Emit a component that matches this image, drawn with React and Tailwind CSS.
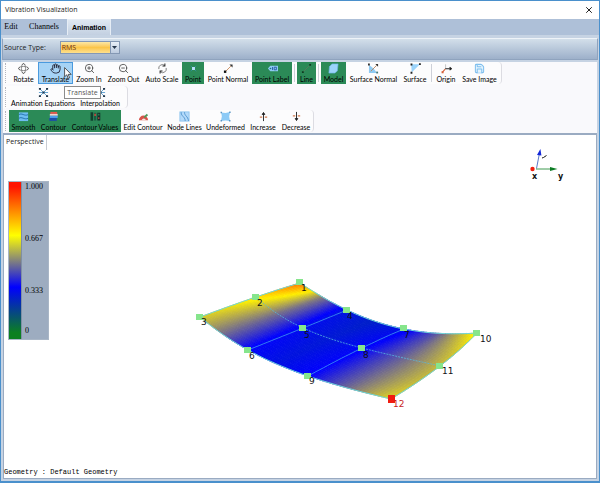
import React from "react";
import { Hand, Save, X, ZoomIn, ZoomOut } from "lucide-react";

const ICON = "block h-[11px] w-[11px]";

function Glyph({ children }) {
  return (
    <svg viewBox="0 0 12 12" className={ICON} fill="none" aria-hidden="true">
      {children}
    </svg>
  );
}

const icons = {
  rotate: (
    <Glyph>
      <ellipse cx="6" cy="6" rx="5.2" ry="2.2" stroke="#777" strokeWidth="0.9" />
      <ellipse cx="6" cy="6" rx="2.2" ry="5.2" stroke="#777" strokeWidth="0.9" />
      <path d="M4.6 1.8 6 .4l1.4 1.4M4.6 10.2 6 11.6l1.4-1.4M1.8 4.6.4 6l1.4 1.4M10.200 4.600 11.600 6l-1.400 1.400" stroke="#444" strokeWidth="0.8" />
    </Glyph>
  ),
  translate: <Hand className={ICON} color="#223" strokeWidth={2} />,
  zoomIn: <ZoomIn className={ICON} color="#444" strokeWidth={1.8} />,
  zoomOut: <ZoomOut className={ICON} color="#444" strokeWidth={1.8} />,
  autoScale: (
    <Glyph>
      <path d="M2 6.6A4 4 0 0 1 8.4 2.6M10 5.4A4 4 0 0 1 3.6 9.6" stroke="#777" strokeWidth="1" />
      <path d="M8.6.6v2.6H6M3.4 11.4V8.8H6" stroke="#222" strokeWidth="1.1" />
    </Glyph>
  ),
  point: (
    <Glyph>
      <path d="m3 3 6 6M9 3 3 9" stroke="#2f8f9c" strokeWidth="1" />
      <rect x="4.4" y="4.4" width="3.2" height="3.2" fill="#b8e2ff" />
    </Glyph>
  ),
  pointNormal: (
    <Glyph>
      <path d="M2.5 9.5 8.6 3.4" stroke="#c98a5c" strokeWidth="1" />
      <path d="M7 1.6h3.4V5z" fill="#333" />
      <rect x="1" y="8.2" width="2.6" height="2.6" fill="#111" />
    </Glyph>
  ),
  pointLabel: (
    <Glyph>
      <path d="M1 6l2.600-3H12v6H3.600z" fill="#8ccaf0" />
      <circle cx="3.8" cy="6" r="0.9" fill="#1d6b8c" />
      <path d="M6 4.4v3.2M7.800 4.600h2.400v2.8H7.800z" stroke="#1c4f9a" strokeWidth="0.9" />
    </Glyph>
  ),
  line: (
    <Glyph>
      <path d="m2 10 8-8" stroke="#5a7a5c" strokeWidth="0.9" />
      <path d="M1 9h2v2H1zM9 1h2v2H9z" fill="#0e3c22" />
    </Glyph>
  ),
  model: (
    <Glyph>
      <path d="M4.400 1h6.600l-.8 7.6L7.600 11H1l.6-7.2z" fill="#9bd3fb" stroke="#6ab4e4" strokeWidth="0.7" />
    </Glyph>
  ),
  surfaceNormal: (
    <Glyph>
      <path d="M1 2v9h9L6 6z" fill="#8fcaf2" />
      <path d="m3 9 6.4-6.4" stroke="#b88760" strokeWidth="1" />
      <path d="M8 1.2h3v3zM0 .6h2v2H0z" fill="#333" />
      <path d="M9 9.4h2v2H9z" fill="#477" />
    </Glyph>
  ),
  surface: (
    <Glyph>
      <path d="M1.4 1.4h9.4l-9 9z" fill="#9bd3fb" />
      <path d="M.6.6h2v2h-2zM9.8.2h2v2h-2zM.6 9.6h2v2h-2z" fill="#222" />
    </Glyph>
  ),
  origin: (
    <Glyph>
      <path d="M5 1.4v5" stroke="#bbb" strokeWidth="0.9" />
      <path d="M4.6 6.2h7M9.4 4.6l2 1.6-2 1.6" stroke="#222" strokeWidth="1.2" />
      <path d="m4.6 6.6-3 3.4" stroke="#d4603a" strokeWidth="1.2" />
      <path d="M.6 9h2.2v2.2H.6z" fill="#d4603a" />
    </Glyph>
  ),
  save: <Save className={ICON} color="#7fbfee" fill="#e4f4fe" strokeWidth={2.2} />,
  equations: (
    <Glyph>
      <path d="m1 1 10 10M11 1 1 11M1 6h10" stroke="#5b9fd0" strokeWidth="1" />
      <path d="M1 1h2.2v2H1zM8.8 1H11v2H8.8zM1 9h2.2v2H1zM8.8 9H11v2H8.8zM5 5h2v2H5z" fill="#1f3347" />
    </Glyph>
  ),
  smooth: (
    <Glyph>
      <rect x="1" y="1.500" width="10" height="9.500" fill="#6dbcf0" />
      <path d="M1 4c3-2.4 6 2 10 0M1 8c3-2.4 6 2 10 0" stroke="#1c6fa8" strokeWidth="1" />
    </Glyph>
  ),
  contour: (
    <Glyph>
      <path d="M2.6 1h7.400v2.2H2.600z" fill="#e2574c" />
      <path d="M2 3.2h8.600v2H2z" fill="#f1d3cf" />
      <path d="M2 5.200h8.600v2.400H2z" fill="#4e9ff0" />
      <path d="M1.400 7.600H9.600v3.200H1.400z" fill="#1e4ea8" />
    </Glyph>
  ),
  contourValues: (
    <Glyph>
      <path d="M.6 1.4h2.800v9.200H.6z" fill="#10402e" />
      <path d="M4.400 2h2.400v8.400H4.400z" fill="#1c5a44" />
      <path d="M4.600 3h2v2.400h-2zM8.600 6.400h2v2.400h-2z" fill="#b5483f" />
      <path d="M8 1.800h3.200v8.600H8zM8.900 3v2h1.400V3zM8.900 6.800v2h1.400v-2z" fill="#142e2a" fillRule="evenodd" />
    </Glyph>
  ),
  editContour: (
    <Glyph>
      <path d="M1 10a5 5 0 0 1 10 0z" fill="#d9534a" />
      <path d="M4 10a2.4 2.4 0 0 1 4.6 0z" fill="#f2e9e4" />
      <path d="M6 6.6 9.6 3l1.4 1.6-3.6 3z" fill="#4a9a58" />
    </Glyph>
  ),
  nodeLines: (
    <Glyph>
      <rect x="1" y="1" width="10" height="10" fill="#b4dafa" stroke="#8cc4ee" />
      <path d="M2.4 1.4c0 5 4 4 4.4 9.4M6 1.4c0 4 3.6 4 4.4 9.4" stroke="#4b92cc" strokeWidth="1" />
    </Glyph>
  ),
  undeformed: (
    <Glyph>
      <path d="m1.400 1.600 4.600.6 5-1L10 6l.8 4.8-4.800-.4-5 .6L2 6z" fill="#8ccaf6" />
      <path d="M.6.8h1.600v1.600H.6zM10 .6h1.6v1.600H10zM.6 9.8h1.6v1.600H.6zM9.800 9.800h1.6v1.600H9.800z" fill="#5b96c4" />
    </Glyph>
  ),
  increase: (
    <Glyph>
      <path d="M6 11V3M4.600 3.800 6 1.600l1.400 2.200z" stroke="#222" fill="#222" strokeWidth="1" />
      <path d="M2 6.6h2.600M7.400 6.6H10" stroke="#d0794e" strokeWidth="1.4" />
    </Glyph>
  ),
  decrease: (
    <Glyph>
      <path d="M6 1v8M4.600 8.200 6 10.400l1.400-2.200z" stroke="#222" fill="#222" strokeWidth="1" />
      <path d="M2 5.4h2.600M7.400 5.4H10" stroke="#d0794e" strokeWidth="1.4" />
    </Glyph>
  ),
};

function Tool({ icon, label, width, state = "plain" }) {
  const look = {
    plain: "",
    on: "bg-[#2b8a57]",
    hover: "bg-[#a6d3f5] outline outline-1 -outline-offset-1 outline-[#4a9ade]",
  }[state];
  return (
    <button
      type="button"
      aria-pressed={state === "on"}
      className={`flex h-[22px] shrink-0 flex-col items-center justify-between pt-px font-['Lato',sans-serif] text-[7px] leading-[10px] whitespace-nowrap text-black ${width} ${look}`}
    >
      {icons[icon]}
      <span>{label}</span>
    </button>
  );
}

function Grip() {
  return <span className="ml-[2px] h-[20px] w-[4px] shrink-0 border-l border-dotted border-[#b4b4bc]" />;
}

function Divider({ width }) {
  return (
    <span className={`flex shrink-0 justify-center ${width}`}>
      <span className="h-[18px] w-px bg-[#cdd0d8]" />
    </span>
  );
}

function Ribbon({ label, children }) {
  return (
    <div role="toolbar" aria-label={label} className="flex items-center self-start rounded-r-sm border-r border-[#dcdce2] bg-[#fcfcfd]">
      {children}
    </div>
  );
}

/* Node positions on the three long edges of the plate, left to right. */
const rails = [
  [[200, 317], [248, 350], [308, 376], [391, 399]],
  [[256, 297], [303, 328], [362, 348], [440, 366]],
  [[300, 283], [347, 310], [404, 329], [477, 333]],
];

/* Normalised amplitude, sampled at even steps along each of those edges. */
const amplitude = [
  [0.62, 0.48, 0.33, 0.29, 0.33, 0.47, 0.63],
  [0.7, 0.48, 0.31, 0.27, 0.32, 0.45, 0.59],
  [0.88, 0.51, 0.29, 0.25, 0.3, 0.45, 0.68],
];

function cubic(p, u) {
  const t = u * 3;
  return (
    (-p[0] * (t - 1) * (t - 2) * (t - 3)) / 6 +
    (p[1] * t * (t - 2) * (t - 3)) / 2 -
    (p[2] * t * (t - 1) * (t - 3)) / 2 +
    (p[3] * t * (t - 1) * (t - 2)) / 6
  );
}

function linear(p, u) {
  const t = u * (p.length - 1);
  const i = Math.min(p.length - 2, Math.floor(t));
  return p[i] + (p[i + 1] - p[i]) * (t - i);
}

function across(q, v) {
  return q[0] * (2 * v - 1) * (v - 1) + q[1] * 4 * v * (1 - v) + q[2] * v * (2 * v - 1);
}

function surfacePoint(u, v) {
  return [0, 1].map((axis) =>
    across(rails.map((rail) => cubic(rail.map((p) => p[axis]), u)), v)
  );
}

const stops = [
  [0, [0, 128, 32]],
  [0.333, [0, 0, 255]],
  [0.667, [255, 240, 0]],
  [1, [255, 20, 0]],
];

function scaleColour(value) {
  const x = Math.min(1, Math.max(0, value));
  const i = x < 0.333 ? 0 : x < 0.667 ? 1 : 2;
  const [a, ca] = stops[i];
  const [b, cb] = stops[i + 1];
  const k = (x - a) / (b - a);
  return `rgb(${ca.map((c, n) => Math.round(c + (cb[n] - c) * k)).join(",")})`;
}

const COLS = 90;
const ROWS = 24;
const cells = [];
for (let i = 0; i < COLS; i++) {
  for (let j = 0; j < ROWS; j++) {
    const u = [i / COLS, (i + 1) / COLS];
    const v = [j / ROWS, (j + 1) / ROWS];
    const mid = [(u[0] + u[1]) / 2, (v[0] + v[1]) / 2];
    cells.push({
      points: [[u[0], v[0]], [u[1], v[0]], [u[1], v[1]], [u[0], v[1]]]
        .map(([a, b]) => surfacePoint(a, b).map((n) => n.toFixed(2)).join(","))
        .join(" "),
      fill: scaleColour(across(amplitude.map((row) => linear(row, mid[0])), mid[1])),
    });
  }
}

function trace(fn) {
  return Array.from({ length: 31 }, (_, i) => fn(i / 30).map((n) => n.toFixed(1)).join(",")).join(" ");
}

const nodes = [
  ["1", 300, 282, 301, 291],
  ["2", 256, 297, 257, 306],
  ["3", 200, 317, 201, 325],
  ["4", 347, 310, 347, 319],
  ["5", 303, 328, 304, 338],
  ["6", 248, 350, 249, 359],
  ["7", 404, 328, 404, 338],
  ["8", 362, 348, 363, 358],
  ["9", 308, 376, 309, 384],
  ["10", 477, 333, 480, 342],
  ["11", 440, 366, 442, 374],
];

function Scene() {
  return (
    <svg viewBox="4 135 592 343" className="absolute inset-0 h-full w-full" role="img" aria-label="Deformed plate geometry">
      <g strokeWidth="0.8">
        {cells.map((c, i) => (
          <polygon key={i} points={c.points} fill={c.fill} stroke={c.fill} />
        ))}
      </g>
      <g fill="none" stroke="#6fd6dc" strokeWidth="1">
        <polyline points={trace((t) => surfacePoint(t, 0))} />
        <polyline points={trace((t) => surfacePoint(t, 1))} />
        <polyline points={trace((t) => surfacePoint(0, t))} />
        <polyline points={trace((t) => surfacePoint(1, t))} />
      </g>
      <g fill="none" stroke="#3f9cf0" strokeWidth="0.8">
        <polyline points={trace((t) => surfacePoint(1 / 3, t))} />
        <polyline points={trace((t) => surfacePoint(2 / 3, t))} />
        <polyline points={trace((t) => surfacePoint(t, 0.5))} strokeDasharray="2 1" stroke="#58b8e0" />
      </g>
      <g className="font-['DejaVu_Sans',sans-serif] text-[9px]" fill="#111">
        {nodes.map(([name, x, y, tx, ty]) => (
          <g key={name}>
            <rect x={x - 4} y={y - 3} width="7" height="6" fill="#86e58c" />
            <text x={tx} y={ty}>{name}</text>
          </g>
        ))}
        <rect x="388" y="395" width="7" height="8" fill="#f01c10" />
        <text x="393" y="407" fill="#c81e1e">12</text>
      </g>
      <path d="M536.500 168.500 539.500 153" stroke="#5a78c8" strokeWidth="1" />
      <path d="m537 155 3.400-6 1 6.600z" fill="#1428d8" />
      <path d="M536 169h16" stroke="#3f9a50" strokeWidth="1" />
      <path d="m550 167 7.500 2-7.500 2z" fill="#0c7c24" />
      <circle cx="532.500" cy="169" r="2.200" fill="#f02010" />
      <path d="m542 158 1.500-.500 3-2" stroke="#111" strokeWidth="1" fill="none" />
      <g className="font-['DejaVu_Sans',sans-serif] text-[8px] font-bold" fill="#111">
        <text x="532" y="179">x</text>
        <text x="558" y="179">y</text>
      </g>
    </svg>
  );
}

function ColourScale() {
  return (
    <div className="mt-[31px] ml-1 flex h-[159px] w-[41px] border border-[#a9b6c6] bg-[#9dacc0]">
      <div className="w-[12px] bg-[linear-gradient(to_bottom,#ff1400_0%,#ff1400_3%,#ffff00_34%,#0000ff_67%,#0b8020_96%)]" />
      <ol className="flex flex-1 flex-col border-l border-[#7f8fa4] pl-[3px] font-['Liberation_Serif',serif] text-[8px] leading-[10px] text-black">
        <li className="h-[52px]">1.000</li>
        <li className="h-[52px]">0.667</li>
        <li className="h-[40px]">0.333</li>
        <li>0</li>
      </ol>
    </div>
  );
}

export default function App() {
  return (
    <main className="flex min-h-screen flex-col border border-b-2 border-[#4a90cc] bg-[#c6d3e3] font-['Open_Sans','Noto_Sans',sans-serif] text-[7px] text-[#1a1a1a]">
      <header className="flex h-[18px] items-center justify-between bg-white pr-[5px] pl-1">
        <h1 className="text-[7px] leading-[10px]">Vibration Visualization</h1>
        <button type="button" aria-label="Close">
          <X className="h-[10px] w-[10px]" color="#222" strokeWidth={2.4} />
        </button>
      </header>

      <nav role="tablist" className="flex h-[16px] items-stretch bg-[#aec0d8] font-['Liberation_Serif',serif] text-[8px] leading-[16px] text-black">
        <button type="button" role="tab" aria-selected="false" className="w-[20px] text-center">Edit</button>
        <button type="button" role="tab" aria-selected="false" className="w-[46px] text-center">Channels</button>
        <button
          type="button"
          role="tab"
          aria-selected="true"
          className="w-[44px] border-x border-t border-[#e6edf5] bg-linear-to-b from-[#dfe8f2] to-[#c3d0e1] text-center font-['Liberation_Sans',sans-serif] text-[7px] leading-[16px] font-bold"
        >
          Animation
        </button>
      </nav>

      <form className="mx-px mt-[3px] flex h-[22px] items-center gap-[14px] border border-[#8fa3be] border-t-[#eef3f8] bg-linear-to-b from-[#d3dfea] to-[#9db0ca] pb-[3px] pl-px">
        <label htmlFor="source" className="leading-[10px]">Source Type:</label>
        <div className="relative">
          <select
            id="source"
            defaultValue="RMS"
            className="block h-[13px] w-[60px] appearance-none border border-[#8498b4] bg-linear-to-b from-[#fbe7a4] via-[#fbc548] to-[#fde08c] pl-px text-[7px] leading-[10px] text-[#6b2a10]"
          >
            <option>RMS</option>
          </select>
          <span className="pointer-events-none absolute inset-y-px right-px flex w-[9px] items-center justify-center border-l border-[#8498b4] bg-linear-to-b from-[#e8eff7] to-[#bccbdf]">
            <svg viewBox="0 0 5 3" className="h-[3px] w-[5px]" aria-hidden="true">
              <path d="M0 0h5L2.500 3z" fill="#26364c" />
            </svg>
          </span>
        </div>
      </form>

      <section className="relative mx-[2px] mt-[2px] flex h-[71px] flex-col gap-[2px] bg-[#f9f9fc]">
        <Ribbon label="View">
          <Grip />
          <Tool icon="rotate" label="Rotate" width="w-[29px]" />
          <Tool icon="translate" label="Translate" width="w-[35px]" state="hover" />
          <Tool icon="zoomIn" label="Zoom In" width="w-[32px]" />
          <Tool icon="zoomOut" label="Zoom Out" width="w-[37px]" />
          <Tool icon="autoScale" label="Auto Scale" width="w-[40px]" />
          <Tool icon="point" label="Point" width="w-[22px]" state="on" />
          <Tool icon="pointNormal" label="Point Normal" width="w-[48px]" />
          <Tool icon="pointLabel" label="Point Label" width="w-[40px]" state="on" />
          <Divider width="w-[5px]" />
          <Tool icon="line" label="Line" width="w-[19px]" state="on" />
          <Divider width="w-[5px]" />
          <Tool icon="model" label="Model" width="w-[25px]" state="on" />
          <Tool icon="surfaceNormal" label="Surface Normal" width="w-[55px]" />
          <Tool icon="surface" label="Surface" width="w-[28px]" />
          <Divider width="w-[5px]" />
          <Tool icon="origin" label="Origin" width="w-[24px]" />
          <Tool icon="save" label="Save Image" width="w-[43px]" />
        </Ribbon>
        <Ribbon label="Analysis">
          <Grip />
          <Tool icon="equations" label="Animation Equations" width="w-[68px]" />
          <Tool icon="equations" label="Interpolation" width="w-[46px]" />
          <span className="w-[4px]" />
        </Ribbon>
        <Ribbon label="Display">
          <Grip />
          <Tool icon="smooth" label="Smooth" width="w-[29px]" state="on" />
          <Tool icon="contour" label="Contour" width="w-[31px]" state="on" />
          <Tool icon="contourValues" label="Contour Values" width="w-[52px]" state="on" />
          <Tool icon="editContour" label="Edit Contour" width="w-[44px]" />
          <Tool icon="nodeLines" label="Node Lines" width="w-[39px]" />
          <Tool icon="undeformed" label="Undeformed" width="w-[43px]" />
          <Tool icon="increase" label="Increase" width="w-[32px]" />
          <Tool icon="decrease" label="Decrease" width="w-[34px]" />
        </Ribbon>
        <div role="tooltip" className="absolute top-[24px] left-[61px] h-[13px] w-[37px] border border-[#8c8c8c] bg-white text-center leading-[11px] text-[#555]">
          Translate
        </div>
        <svg viewBox="0 0 8 12" className="absolute top-[5px] left-[61px] h-[12px] w-[8px]" aria-hidden="true">
          <path d="M.6.600v9.200l2.200-2 1.400 3.600 1.400-.6-1.400-3.400h3z" fill="#fff" stroke="#333" strokeWidth="0.8" />
        </svg>
      </section>

      <section className="relative mx-[2px] mb-[2px] flex flex-1 flex-col border border-t-2 border-[#9aabc2] bg-white">
        <Scene />
        <h2 className="h-[15px] w-[43px] self-start border-r border-[#c8ccd4] pl-[2px] leading-[14px]">Perspective</h2>
        <ColourScale />
        <p className="mt-auto font-['Liberation_Mono',monospace] leading-[11px] text-black">Geometry : Default Geometry</p>
      </section>
    </main>
  );
}
